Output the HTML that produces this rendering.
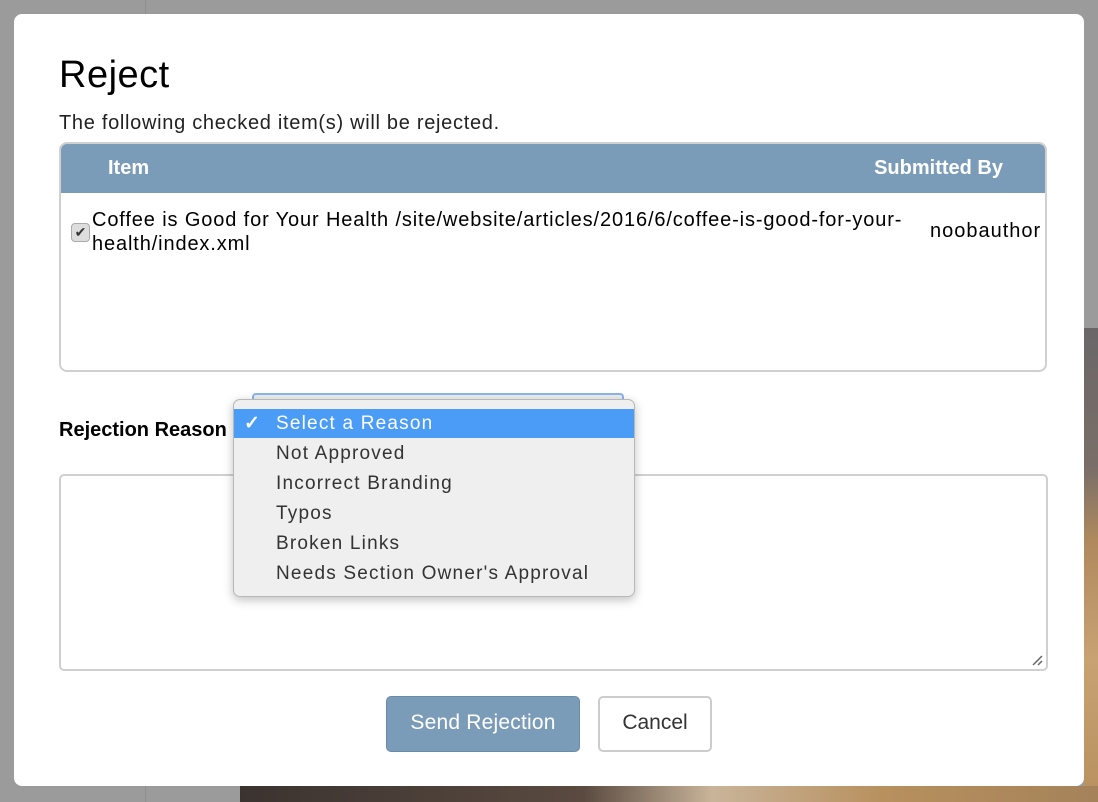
<!DOCTYPE html>
<html><head><style>
*{box-sizing:border-box;margin:0;padding:0}
body{width:1098px;height:802px;background:#9b9b9b;position:relative;overflow:hidden;font-family:"Liberation Sans",Arial,sans-serif;color:#000}
.abs{position:absolute}
</style></head><body>
<div class="abs" style="left:145px;top:0;width:1px;height:802px;background:#8e8e8e"></div>
<div class="abs" style="left:1084px;top:328px;width:14px;height:474px;background:linear-gradient(#6a6668,#7b6f68 30%,#b08a5e 45%,#c8a273 70%,#b89060)"></div>
<div class="abs" style="left:240px;top:786px;width:858px;height:16px;background:linear-gradient(90deg,#3b3330,#5a4a40 40%,#c9b49a 55%,#b8905e 75%,#a5825a)"></div>
<div class="abs" style="left:14px;top:14px;width:1070px;height:772px;background:#fff;border-radius:8px"></div>
<div class="abs" style="left:59px;top:54px;font-size:38px;font-weight:500;letter-spacing:0.5px">Reject</div>
<div class="abs" style="left:59px;top:112px;font-size:20px;color:#222;letter-spacing:0.7px">The following checked item(s) will be rejected.</div>
<div class="abs" style="left:59px;top:142px;width:988px;height:230px;border:2px solid #d0d0d0;border-radius:8px;overflow:hidden">
 <div style="height:49px;background:#7b9cb9;color:#fff;font-size:20px;font-weight:bold;position:relative">
  <span class="abs" style="left:47px;top:13px">Item</span>
  <span class="abs" style="right:42px;top:13px">Submitted By</span>
 </div>
 <div class="abs" style="left:10px;top:79px;width:19px;height:19px;border:1px solid #aaa;border-radius:4px;background:#ddd;font-size:14px;line-height:17px;text-align:center;color:#333">✔</div>
 <div class="abs" style="left:31px;top:64px;font-size:20px;line-height:24px;width:860px;letter-spacing:0.87px">Coffee is Good for Your Health /site/website/articles/2016/6/coffee-is-good-for-your-health/index.xml</div>
 <div class="abs" style="left:869px;top:76px;font-size:20px;letter-spacing:1px">noobauthor</div>
</div>
<div class="abs" style="left:59px;top:419px;font-size:20px;font-weight:bold">Rejection Reason</div>
<div class="abs" style="left:252px;top:393px;width:372px;height:20px;border:2px solid #8ab4ec;border-radius:4px;background:#eee"></div>
<div class="abs" style="left:59px;top:474px;width:989px;height:197px;border:2px solid #d0d0d0;border-radius:5px;background:#fff">
 <svg class="abs" style="right:3px;bottom:3px" width="12" height="12"><path d="M2 11L11 2M7 11L11 7" stroke="#666" stroke-width="1.5"/></svg>
</div>
<div class="abs" style="left:233px;top:399px;width:402px;height:198px;background:#efefef;border:1px solid #b8b8b8;border-radius:7px;box-shadow:0 3px 10px rgba(0,0,0,.25);font-size:19px;color:#333;letter-spacing:1.2px">
 <div style="margin-top:9px;height:29px;background:#4a9cf7;color:#fff;line-height:29px;padding-left:42px;position:relative"><span class="abs" style="left:10px;top:0;font-weight:bold">✓</span>Select a Reason</div>
 <div style="height:30px;line-height:31px;padding-left:42px">Not Approved</div>
 <div style="height:30px;line-height:31px;padding-left:42px">Incorrect Branding</div>
 <div style="height:30px;line-height:31px;padding-left:42px">Typos</div>
 <div style="height:30px;line-height:31px;padding-left:42px">Broken Links</div>
 <div style="height:30px;line-height:31px;padding-left:42px">Needs Section Owner's Approval</div>
</div>
<div class="abs" style="left:386px;top:696px;width:194px;height:56px;background:#7b9cb9;border:1px solid #6a8cab;border-radius:5px;color:#fff;font-size:21px;line-height:52px;text-align:center;letter-spacing:0.2px">Send Rejection</div>
<div class="abs" style="left:598px;top:696px;width:114px;height:56px;background:#fff;border:2px solid #ccc;border-radius:5px;color:#333;font-size:21px;line-height:50px;text-align:center">Cancel</div>
</body></html>
